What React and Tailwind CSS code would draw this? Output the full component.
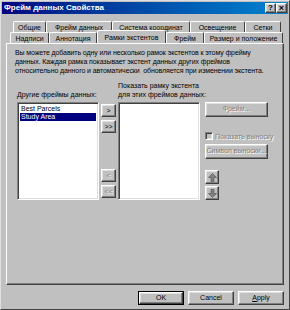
import React from "react";

const raised =
  "border border-t-white border-l-white border-r-[#404040] border-b-[#404040] shadow-[inset_-1px_-1px_0_#808080,inset_1px_1px_0_#dfdfdf]";
const sunken =
  "border border-t-[#808080] border-l-[#808080] border-r-white border-b-white shadow-[inset_1px_1px_0_#404040,inset_-1px_-1px_0_#dfdfdf]";
const disabledText = "text-[#808080] [text-shadow:1px_1px_0_#fff]";

const Tab = ({ label, w, active }) => (
  <div
    className={`${w} flex items-center justify-center border border-b-0 border-t-white border-l-white border-r-[#404040] rounded-t-[2px] bg-[#c0c0c0] ${
      active ? "h-[13px] -mt-[2px] relative z-10 -mb-[1px]" : "h-[11px]"
    }`}
  >
    <span className="leading-none whitespace-nowrap">{label}</span>
  </div>
);

const SmallBtn = ({ children, disabled }) => (
  <div
    className={`${raised} w-[15px] h-[13px] flex items-center justify-center bg-[#c0c0c0] ${
      disabled ? disabledText : "text-black"
    }`}
  >
    <span className="leading-none text-[7px]">{children}</span>
  </div>
);

const ArrowBtn = ({ down }) => (
  <div className={`${raised} w-[14px] h-[14px] flex items-center justify-center bg-[#c0c0c0]`}>
    <svg width="9" height="9" viewBox="0 0 9 9" className={down ? "rotate-180" : ""}>
      <path d="M4.5 0.5 L8.5 4.5 L6 4.5 L6 8.5 L3 8.5 L3 4.5 L0.5 4.5 Z" fill="#808080" stroke="#404040" strokeWidth="0.5" />
    </svg>
  </div>
);

const App = () => {
  const row1 = [
    ["Общие", "w-[33px]"],
    ["Фрейм данных", "w-[66px]"],
    ["Система координат", "w-[78px]"],
    ["Освещение", "w-[55px]"],
    ["Сетки", "w-[36px]"],
  ];
  const row2 = [
    ["Надписи", "w-[39px]"],
    ["Аннотация", "w-[48px]"],
    ["Рамки экстентов", "w-[69px]", true],
    ["Фрейм", "w-[38px]"],
    ["Размер и положение", "w-[79px]"],
  ];

  return (
    <div className="w-[290px] h-[310px] bg-[#c0c0c0] border border-t-[#dfdfdf] border-l-[#dfdfdf] border-r-[#404040] border-b-[#404040] flex flex-col text-[7px] text-black font-['Liberation_Sans',Arial,sans-serif] overflow-hidden">
      {/* Title bar */}
      <div className="mx-[1px] mt-[1px] h-[12px] flex items-center justify-between pl-[2px] pr-[1px] bg-gradient-to-r from-[#000080] to-[#1084d0]">
        <span className="text-white font-bold text-[8px] leading-none">Фрейм данных Свойства</span>
        <div className="flex">
          <div className={`${raised} w-[11px] h-[10px] bg-[#c0c0c0] flex items-center justify-center font-bold text-[8px] leading-none`}>?</div>
          <div className={`${raised} w-[11px] h-[10px] bg-[#c0c0c0] flex items-center justify-center font-bold text-[9px] leading-none`}>×</div>
        </div>
      </div>

      {/* Tabs */}
      <div className="mt-[7px] flex flex-col">
        <div className="flex ml-[12px]">
          {row1.map(([l, w]) => (
            <Tab key={l} label={l} w={w} />
          ))}
        </div>
        <div className="flex ml-[9px]">
          {row2.map(([l, w, a]) => (
            <Tab key={l} label={l} w={w} active={a} />
          ))}
        </div>
      </div>

      {/* Panel */}
      <div className="mx-[5px] h-[242px] border border-t-white border-l-white border-r-[#404040] border-b-[#404040] shadow-[inset_-1px_-1px_0_#808080] px-[8px] pt-[4px]">
        <p className="leading-[9px] tracking-[-0.1px] whitespace-nowrap">
          Вы можете добавить одну или несколько рамок экстентов к этому фрейму
          <br />
          данных. Каждая рамка показывает экстент данных других фреймов
          <br />
          относительно данного и автоматически&nbsp; обновляется при изменении экстента.
        </p>

        <div className="mt-[6px] ml-[2px] flex items-start">
          <div className="w-[82px] flex flex-col">
            <div className="h-[18px] flex items-end leading-[9px] whitespace-nowrap">Другие фреймы данных:</div>
            <div className={`${sunken} mt-[3px] h-[98px] bg-white p-[2px] flex flex-col`}>
              <div className="leading-[8px] px-[1px]">Best Parcels</div>
              <div className="leading-[8px] px-[1px] bg-[#000080] text-white">Study Area</div>
            </div>
          </div>

          <div className="ml-[2px] mt-[23px] flex flex-col">
            <SmallBtn>&gt;</SmallBtn>
            <div className="mt-[3px]">
              <SmallBtn>&gt;&gt;</SmallBtn>
            </div>
            <div className="mt-[36px]">
              <SmallBtn disabled>&lt;</SmallBtn>
            </div>
            <div className="mt-[3px]">
              <SmallBtn disabled>&lt;&lt;</SmallBtn>
            </div>
          </div>

          <div className="ml-[2px] w-[82px] flex flex-col">
            <div className="h-[18px] flex flex-col justify-end leading-[9px] whitespace-nowrap">
              <span>Показать рамку экстента</span>
              <span>для этих фреймов данных:</span>
            </div>
            <div className={`${sunken} mt-[3px] h-[98px] bg-white`} />
          </div>

          <div className="ml-[5px] mt-[21px] w-[63px] flex flex-col">
            <div className={`${raised} h-[15px] flex items-center justify-center ${disabledText}`}>Фрейм...</div>
            <div className="mt-[15px] flex items-center gap-[2px]">
              <div className={`${sunken} w-[8px] h-[8px] shrink-0 bg-[#c0c0c0]`} />
              <span className={`${disabledText} whitespace-nowrap leading-none`}>Показать выноску</span>
            </div>
            <div className={`${raised} mt-[4px] h-[15px] flex items-center justify-center ${disabledText} whitespace-nowrap`}>Символ выноски...</div>
            <div className="mt-[11px] flex flex-col gap-[2px]">
              <ArrowBtn />
              <ArrowBtn down />
            </div>
          </div>
        </div>
      </div>

      {/* Footer buttons */}
      <div className="mt-[6px] mr-[5px] flex justify-end gap-[4px]">
        <div className="w-[46px] h-[14px] border border-black flex">
          <div className={`${raised} flex-1 flex items-center justify-center`}>OK</div>
        </div>
        <div className={`${raised} w-[46px] h-[14px] flex items-center justify-center`}>Cancel</div>
        <div className={`${raised} w-[46px] h-[14px] flex items-center justify-center`}>
          <span><span className="underline">A</span>pply</span>
        </div>
      </div>
    </div>
  );
};

export default App;
